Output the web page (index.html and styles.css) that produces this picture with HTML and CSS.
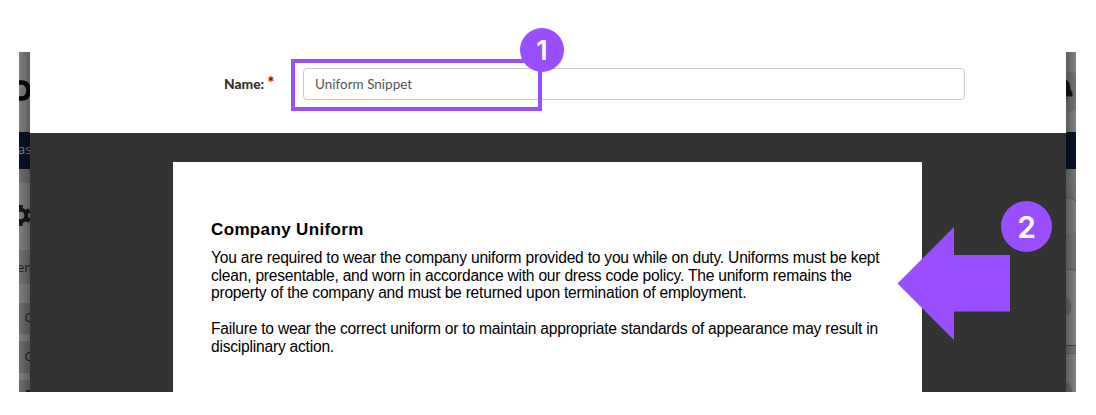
FILE: index.html
```
<!DOCTYPE html>
<html lang="en">
<head>
<meta charset="utf-8">
<title>Uniform Snippet</title>
<link rel="stylesheet" href="styles.css">
</head>
<body>
<main class="stage">
  <svg class="backdrop" width="11" height="340" viewBox="0 0 11 340" aria-hidden="true">
    <defs>
      <linearGradient id="shadeL"><stop offset="0" stop-color="#000" stop-opacity="0"/><stop offset="1" stop-color="#000" stop-opacity=".27"/></linearGradient>
    </defs>
    <rect width="11" height="340" fill="#808080"/>
    <path d="M-5 30.500H2Q9.500 30.500 9.500 38.500T2 46.500H-5" fill="none" stroke="#050505" stroke-width="4.500"/>
    <rect y="80" width="11" height="37" fill="#081127"/>
    <text class="nav-text" x="-1" y="102">as</text>
    <rect y="117" width="11" height="14" fill="#707070"/>
    <g transform="translate(1.500 163.500)" stroke="#181818" fill="none">
      <circle r="5.800" stroke-width="4"/>
      <path d="M0-10.500V-6M0 6V10.500M9.100-5.200L5.500-3.200M9.100 5.200L5.500 3.200" stroke-width="4.500"/>
    </g>
    <rect y="198" width="11" height="34" fill="#727272"/>
    <text class="side-text" x="-2" y="220">en</text>
    <rect y="251" width="11" height="31" fill="#6d6d6d"/>
    <rect y="289" width="11" height="32" fill="#6d6d6d"/>
    <rect y="328" width="11" height="12" fill="#6d6d6d"/>
    <text class="side-text" x="5.500" y="270">C</text>
    <text class="side-text" x="5.500" y="309">C</text>
    <path d="M7 339H11" stroke="#222" stroke-width="2"/>
    <rect width="11" height="340" fill="url(#shadeL)"/>
  </svg>

  <section class="modal">
    <div class="form-row">
      <label class="field-label" for="name">Name: <span class="required">*</span></label>
      <div class="field" id="name">Uniform Snippet</div>
    </div>
    <div class="editor">
      <article class="paper">
        <h1 class="heading">Company Uniform</h1>
        <p class="copy"><span class="line">You are required to wear the company uniform provided to you while on duty. Uniforms must be kept</span><span class="line">clean, presentable, and worn in accordance with our dress code policy. The uniform remains the</span><span class="line">property of the company and must be returned upon termination of employment.</span></p>
        <p class="copy"><span class="line">Failure to wear the correct uniform or to maintain appropriate standards of appearance may result in</span><span class="line">disciplinary action.</span></p>
      </article>
    </div>
  </section>

  <svg class="backdrop" width="10" height="340" viewBox="0 0 10 340" aria-hidden="true">
    <defs>
      <linearGradient id="shadeR"><stop offset="0" stop-color="#000" stop-opacity=".27"/><stop offset="1" stop-color="#000" stop-opacity="0"/></linearGradient>
    </defs>
    <rect width="10" height="340" fill="#808080"/>
    <path d="M0 19Q5 19 10 22V57Q5 60 0 61Z" fill="#757575"/>
    <path d="M0 28Q4 29 4.500 37L6.500 41V44.500H0Z" fill="#141414"/>
    <path d="M0 46.500H2" stroke="#444" stroke-width="1"/>
    <rect y="80" width="10" height="37" fill="#081127"/>
    <rect y="117" width="10" height="14" fill="#777"/>
    <rect y="131" width="10" height="86" fill="#747474"/>
    <path d="M0 145.500Q6 145.500 10 149V180Q6 182 0 182Z" fill="#7d7d7d"/>
    <path d="M0 145.500Q6 145.500 10 149" fill="none" stroke="#5c5c5c"/>
    <path d="M0 217.500H10" stroke="#5c5c5c"/>
    <circle cx="-6" cy="254.500" r="11.500" fill="#6b6b6b"/>
    <rect y="293" width="10" height="8" fill="#727272"/>
    <path d="M0 293.500H10" stroke="#484848"/>
    <path d="M0 301.500H10" stroke="#666"/>
    <circle cx="-6" cy="340" r="12" fill="#6b6b6b"/>
    <rect width="10" height="340" fill="url(#shadeR)"/>
  </svg>

  <div class="highlight"></div>
  <div class="badge badge-one">1</div>
  <svg class="arrow" width="113" height="113" viewBox="0 0 113 113" aria-hidden="true"><path d="M0.500 56.500L57 0V28H113V84.500H57V113Z" fill="#994fff"/></svg>
  <div class="badge badge-two">2</div>
</main>
</body>
</html>
```
FILE: styles.css
```
* { box-sizing: border-box; }
body { margin: 0; background: #fff; }
.stage {
  position: relative;
  display: flex;
  width: 1096px;
  height: 415px;
  padding: 52px 20px 23px 19px;
  overflow: hidden;
}
.backdrop { display: block; flex: none; }
.nav-text { font: 13px "Open Sans", sans-serif; fill: #818896; }
.side-text { font: 13px "Open Sans", sans-serif; fill: #202020; }
.modal {
  display: flex;
  flex-direction: column;
  width: 1036px;
  height: 340px;
  background: #fff;
}
.form-row {
  display: flex;
  align-items: flex-start;
  height: 81px;
  padding: 16px 101px 0 194px;
}
.field-label {
  width: 79px;
  font: 900 13.8px/32px Lato, sans-serif;
  color: #333;
  white-space: nowrap;
}
.required { font-size: 16px; line-height: 1; color: #a00; }
.field {
  flex: 1;
  height: 32px;
  padding-left: 11px;
  border: 1px solid #ccc;
  border-radius: 4px;
  font: 13.5px/30px Lato, sans-serif;
  color: #555;
}
.editor {
  flex: 1;
  padding: 29px 144px 0 143px;
  background: #333;
}
.paper {
  height: 230px;
  padding: 57px 0 0 38px;
  background: #fff;
  font-family: "Liberation Sans", Arial, sans-serif;
  color: #000;
}
.heading { margin: 0 0 9px; font-size: 17px; line-height: 21px; letter-spacing: .36px; }
.copy { margin: 0 0 18px; font-size: 15.6px; line-height: 17.7px; letter-spacing: -.222px; }
.line { display: block; width: max-content; white-space: nowrap; }
.highlight {
  position: absolute;
  left: 291px;
  top: 59px;
  width: 251px;
  height: 52px;
  border: 4px solid #994fff;
}
.badge {
  position: absolute;
  display: flex;
  align-items: center;
  justify-content: center;
  border-radius: 50%;
  background: #994fff;
  color: #fff;
  font-family: Inter, sans-serif;
  font-weight: 600;
}
.badge-one { left: 520px; top: 28px; width: 44px; height: 44px; font-size: 27px; }
.badge-two { left: 1001px; top: 201px; width: 51px; height: 51px; font-size: 30px; }
.arrow { position: absolute; left: 897px; top: 227px; }
```
